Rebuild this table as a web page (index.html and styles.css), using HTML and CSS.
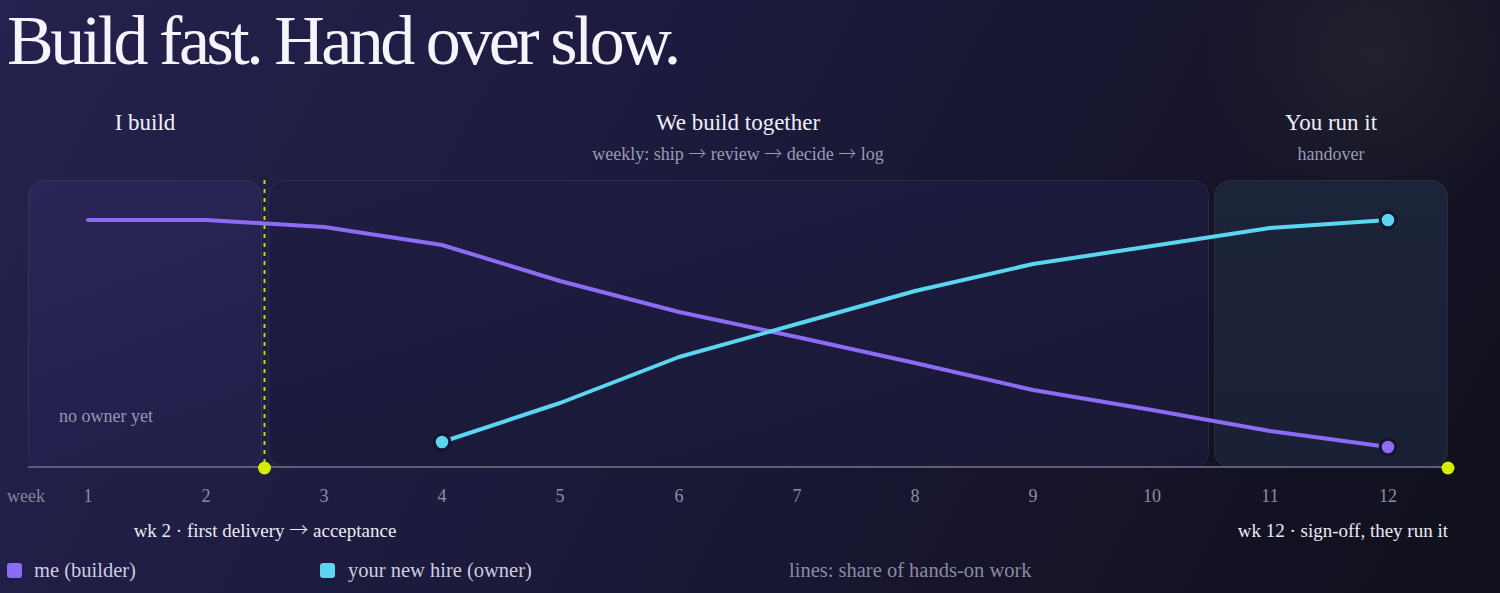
FILE: index.html
```html
<!DOCTYPE html>
<html lang="en">
<head>
<meta charset="utf-8">
<title>Build fast. Hand over slow.</title>
<link rel="stylesheet" href="styles.css">
</head>
<body>
<main class="page">
  <h1 class="title">Build fast. Hand over slow.</h1>

  <section class="phases">
    <div class="phase">
      <h2 class="phase-name">I build</h2>
    </div>
    <div class="phase">
      <h2 class="phase-name">We build together</h2>
      <p class="phase-note">weekly: ship <span class="arrow">→</span> review <span class="arrow">→</span> decide <span class="arrow">→</span> log</p>
    </div>
    <div class="phase">
      <h2 class="phase-name">You run it</h2>
      <p class="phase-note">handover</p>
    </div>
  </section>

  <svg class="chart" width="1500" height="380" viewBox="0 170 1500 380" xmlns="http://www.w3.org/2000/svg">
    <defs>
      <linearGradient id="g1" x1="0" y1="0" x2="0.3" y2="1">
        <stop offset="0" stop-color="#2a2657"/>
        <stop offset="1" stop-color="#221f4b"/>
      </linearGradient>
      <linearGradient id="g2" x1="0" y1="0" x2="1" y2="1">
        <stop offset="0" stop-color="#1f1d43"/>
        <stop offset="1" stop-color="#191834"/>
      </linearGradient>
      <linearGradient id="g3" x1="0" y1="0" x2="0" y2="1">
        <stop offset="0" stop-color="#1c2439"/>
        <stop offset="1" stop-color="#1a2035"/>
      </linearGradient>
    </defs>

    <rect class="box" x="28.5" y="180.5" width="233" height="287" rx="16" fill="url(#g1)"/>
    <rect class="box" x="268.5" y="180.5" width="940" height="287" rx="16" fill="url(#g2)"/>
    <rect class="box" x="1214.5" y="180.5" width="233" height="287" rx="16" fill="url(#g3)"/>

    <line class="axis" x1="28" y1="467" x2="1448" y2="467"/>
    <line class="marker-line" x1="264.5" y1="180" x2="264.5" y2="464"/>

    <text class="note" x="59" y="422">no owner yet</text>

    <polyline class="line-me" points="88,220 206,220 324,227 442,245 560,281 679,312 797,337 915,363 1033,390 1152,410 1270,431 1388,447"/>
    <polyline class="line-hire" points="442,442 560,403 679,357 797,324 915,291 1033,264 1152,246 1270,228 1388,220"/>

    <circle class="dot-hire" cx="442" cy="442" r="7.8"/>
    <circle class="dot-hire" cx="1388" cy="220" r="7.8"/>
    <circle class="dot-me" cx="1388" cy="447" r="7.8"/>

    <circle class="marker" cx="264.5" cy="468" r="6.5"/>
    <circle class="marker" cx="1448" cy="468" r="6.5"/>

    <g class="ticks">
      <text class="tick-label" x="7" y="502">week</text>
      <text x="88" y="502">1</text>
      <text x="206" y="502">2</text>
      <text x="324" y="502">3</text>
      <text x="442" y="502">4</text>
      <text x="560" y="502">5</text>
      <text x="679" y="502">6</text>
      <text x="797" y="502">7</text>
      <text x="915" y="502">8</text>
      <text x="1033" y="502">9</text>
      <text x="1152" y="502">10</text>
      <text x="1270" y="502">11</text>
      <text x="1388" y="502">12</text>
    </g>

    <text class="milestone" x="265" y="537" text-anchor="middle">wk 2 · first delivery <tspan class="arrow">→</tspan> acceptance</text>
    <text class="milestone" x="1448" y="537" text-anchor="end">wk 12 · sign-off, they run it</text>
  </svg>

  <footer class="legend">
    <div class="legend-item"><span class="swatch swatch--me"></span>me (builder)</div>
    <div class="legend-item"><span class="swatch swatch--hire"></span>your new hire (owner)</div>
    <div class="legend-item legend-caption">lines: share of hands-on work</div>
  </footer>
</main>
</body>
</html>
```

FILE: styles.css
```css
html, body {
  margin: 0;
  padding: 0;
}

body {
  width: 1500px;
  height: 593px;
  overflow: hidden;
  font-family: "Liberation Serif", "Times New Roman", serif;
  color: #f1effa;
  background:
    radial-gradient(circle at 1375px 55px, rgba(190, 205, 110, 0.075), rgba(190, 205, 110, 0) 170px),
    linear-gradient(118deg, #24224e 0%, #1c1b3d 40%, #16152c 70%, #100f1b 100%);
}

.page {
  display: flex;
  flex-direction: column;
}

.title {
  margin: 0;
  padding: 6px 0 0 7px;
  font-size: 70px;
  line-height: 70px;
  font-weight: 400;
  letter-spacing: -0.05em;
  color: #f5f3fc;
}

.phases {
  display: grid;
  grid-template-columns: 234px 941px 234px;
  column-gap: 5.5px;
  padding-left: 28px;
  margin-top: 33px;
  height: 56px;
}

.phase {
  display: flex;
  flex-direction: column;
  align-items: center;
  gap: 6px;
}

.phase-name {
  margin: 0;
  font-size: 23px;
  line-height: 28px;
  font-weight: 400;
  color: #f0eef9;
}

.phase-note {
  margin: 0;
  height: 22px;
  font-size: 18px;
  line-height: 22px;
  color: #9a9ab2;
  white-space: nowrap;
}

.arrow {
  font-family: "Noto Sans CJK JP", "DejaVu Serif", serif;
  font-weight: 300;
  line-height: 1;
}

.chart {
  display: block;
  margin-top: 5px;
  font-family: "Liberation Serif", "Times New Roman", serif;
}

.box {
  stroke: rgba(255, 255, 255, 0.075);
  stroke-width: 1;
}

.axis {
  stroke: #5f5e74;
  stroke-width: 2;
}

.marker-line {
  stroke: #c2dc00;
  stroke-width: 2;
  stroke-dasharray: 4 5;
}

.marker {
  fill: #d3ee00;
}

.line-me,
.line-hire {
  fill: none;
  stroke-width: 4;
  stroke-linejoin: round;
  stroke-linecap: round;
}

.line-me {
  stroke: #8d6cf5;
}

.line-hire {
  stroke: #5ad6f0;
}

.dot-me,
.dot-hire {
  stroke: #15132e;
  stroke-width: 3;
}

.dot-me {
  fill: #8d6cf5;
}

.dot-hire {
  fill: #5ad6f0;
}

.note {
  font-size: 18px;
  fill: #9896b2;
}

.ticks text {
  font-size: 18px;
  fill: #8e8da6;
  text-anchor: middle;
}

.ticks .tick-label {
  text-anchor: start;
  fill: #85849c;
}

.milestone {
  font-size: 19px;
  fill: #eceaf5;
}

.legend {
  display: grid;
  grid-template-columns: 313px 469px auto;
  padding-left: 7px;
  margin-top: 8px;
  height: 24px;
  font-size: 20.5px;
  line-height: 24px;
}

.legend-item {
  display: flex;
  align-items: center;
  color: #cfcde0;
}

.swatch {
  width: 15px;
  height: 15px;
  border-radius: 3px;
  margin-right: 12px;
  flex: none;
}

.swatch--me {
  background: #8d6cf5;
}

.swatch--hire {
  background: #5ad6f0;
  margin-right: 13px;
}

.legend-caption {
  color: #8b8aa4;
}
```
